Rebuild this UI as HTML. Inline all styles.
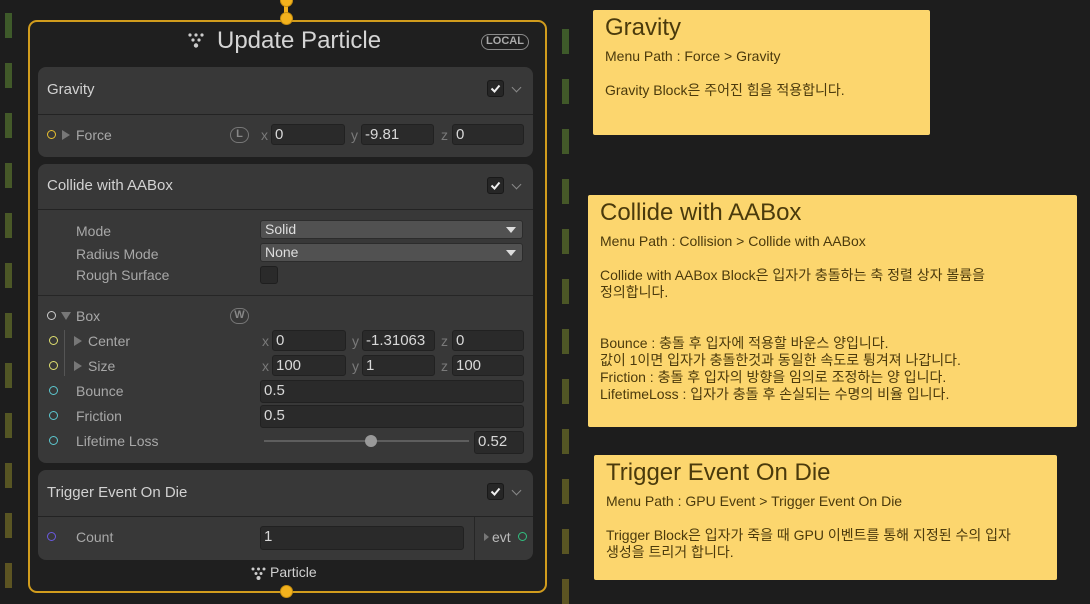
<!DOCTYPE html>
<html><head><meta charset="utf-8"><style>
*{margin:0;padding:0;box-sizing:border-box}
body{width:1090px;height:601px;background:#1d1d1d;position:relative;overflow:hidden;font-family:"Liberation Sans","Noto Sans CJK KR",sans-serif;color:#c4c4c4}
.a{position:absolute}
.dash{position:absolute;width:7px;height:25px}
.node{left:28px;top:20px;width:519px;height:573px;border:2px solid #d19c1d;border-radius:9px;background:#1f1f1f}
.blk{position:absolute;left:38px;width:495px;background:#383838;border-radius:8px}
.hdr{position:absolute;left:0;right:0;top:0;border-bottom:1px solid #232323}
.ht{position:absolute;left:9px;font-size:15px;color:#d2d2d2}
.chk{position:absolute;width:17px;height:17px;background:#262626;border:1px solid #191919;border-radius:3px}
.chev{position:absolute;width:7px;height:7px;border-right:1.5px solid #888;border-bottom:1.5px solid #888;transform:rotate(45deg)}
.lbl{position:absolute;font-size:14px;color:#a8a8a8}
.fld{position:absolute;height:21px;background:#2a2a2a;border:1px solid #212121;border-radius:3px;font-size:15px;color:#d8d8d8;padding-left:3px;line-height:19px}
.ax{position:absolute;font-size:14px;color:#7a7a7a}
.port{position:absolute;width:9px;height:9px;border-radius:50%;border:1.5px solid}
.dd{position:absolute;height:19px;background:#515151;border:1px solid #2c2c2c;border-radius:3px;font-size:14px;color:#dedede;padding-left:4px;line-height:17px}
.dd:after{content:"";position:absolute;right:6px;top:6px;border-left:5px solid transparent;border-right:5px solid transparent;border-top:6px solid #ddd}
.tri{position:absolute;border-top:5px solid transparent;border-bottom:5px solid transparent;border-left:8px solid #777}
.note{position:absolute;background:#fcd66e;border-radius:2px;color:#4b3a0c;font-size:14px;line-height:17px}
.note h1{font-weight:normal;font-size:24px;line-height:28px;color:#4a3a0c}
.pill{position:absolute;border:1.5px solid #8a8a8a;border-radius:9px;font-size:11px;font-weight:bold;color:#aaa;text-align:center}
</style></head><body>

<div id="dl"></div>
<script>
(function(){var h="";for(var i=0;i<12;i++){var y=13+i*50;var t=i/11;var r=Math.round(62+t*30),g=Math.round(90-t*6),b=Math.round(42-t*8);
h+='<div class="dash" style="left:5px;top:'+y+'px;background:rgb('+r+','+g+','+b+')"></div>';
h+='<div class="dash" style="left:562px;top:'+(y+16)+'px;background:rgb('+r+','+g+','+b+')"></div>';}
document.getElementById("dl").outerHTML=h;})();
</script>

<div class="a node"></div>
<div class="a" style="left:284px;top:0;width:4px;height:18px;background:#f3b21d"></div>
<div class="a" style="left:280px;top:-6px;width:13px;height:13px;border-radius:50%;background:#f3b21d;border:1.5px solid #c68e10"></div>
<div class="a" style="left:280px;top:12px;width:13px;height:13px;border-radius:50%;background:#f3b21d;border:1.5px solid #c68e10"></div>
<div class="a" style="left:280px;top:585px;width:13px;height:13px;border-radius:50%;background:#f3b21d;border:1.5px solid #c68e10"></div>

<svg class="a" style="left:188px;top:33px" width="18" height="16"><g fill="#ccc"><circle cx="2" cy="2" r="1.6"/><circle cx="8" cy="2" r="1.6"/><circle cx="14" cy="2" r="1.6"/><circle cx="5" cy="7" r="1.6"/><circle cx="11" cy="7" r="1.6"/><circle cx="8" cy="12.5" r="2.2"/></g></svg>
<div class="a" style="left:217px;top:27px;font-size:24px;color:#d4d4d4">Update Particle</div>
<div class="pill" style="left:481px;top:34px;width:48px;height:16px;line-height:13px">LOCAL</div>

<!-- Gravity -->
<div class="blk" style="top:67px;height:90px">
 <div class="hdr" style="height:48px"><div class="ht" style="top:14px">Gravity</div>
  <div class="chk" style="left:449px;top:13px"><svg width="15" height="15"><path d="M3.5 7.5l3 3 5-6" stroke="#eee" stroke-width="2" fill="none"/></svg></div><div class="chev" style="left:475px;top:17px"></div></div>
</div>
<div class="port" style="left:47px;top:130px;border-color:#e8c030"></div>
<div class="tri" style="left:62px;top:130px"></div>
<div class="lbl" style="left:76px;top:127px">Force</div>
<div class="pill" style="left:230px;top:127px;width:19px;height:16px;line-height:13px;color:#888;border-color:#777">L</div>
<div class="ax" style="left:261px;top:127px">x</div><div class="fld" style="left:271px;top:124px;width:74px">0</div>
<div class="ax" style="left:351px;top:127px">y</div><div class="fld" style="left:361px;top:124px;width:73px">-9.81</div>
<div class="ax" style="left:441px;top:127px">z</div><div class="fld" style="left:452px;top:124px;width:72px">0</div>

<!-- Collide -->
<div class="blk" style="top:164px;height:299px">
 <div class="hdr" style="height:46px"><div class="ht" style="top:13px">Collide with AABox</div>
  <div class="chk" style="left:449px;top:13px"><svg width="15" height="15"><path d="M3.5 7.5l3 3 5-6" stroke="#eee" stroke-width="2" fill="none"/></svg></div><div class="chev" style="left:475px;top:17px"></div></div>
 <div class="a" style="left:0;right:0;top:131px;border-top:1px solid #262626"></div>
</div>
<div class="lbl" style="left:76px;top:223px">Mode</div>
<div class="dd" style="left:260px;top:220px;width:263px">Solid</div>
<div class="lbl" style="left:76px;top:246px">Radius Mode</div>
<div class="dd" style="left:260px;top:243px;width:263px">None</div>
<div class="lbl" style="left:76px;top:267px">Rough Surface</div>
<div class="a" style="left:260px;top:266px;width:18px;height:18px;background:#2a2a2a;border:1px solid #1f1f1f;border-radius:3px"></div>

<div class="port" style="left:47px;top:311px;border-color:#ccc"></div>
<div class="a" style="left:61px;top:312px;border-left:5px solid transparent;border-right:5px solid transparent;border-top:8px solid #777"></div>
<div class="lbl" style="left:76px;top:308px">Box</div>
<div class="pill" style="left:230px;top:308px;width:19px;height:16px;line-height:13px;color:#888;border-color:#777">W</div>

<div class="port" style="left:49px;top:336px;border-color:#e0e070"></div>
<div class="a" style="left:64px;top:330px;width:1px;height:46px;background:#555"></div>
<div class="tri" style="left:74px;top:336px"></div>
<div class="lbl" style="left:88px;top:333px">Center</div>
<div class="ax" style="left:262px;top:333px">x</div><div class="fld" style="left:272px;top:330px;width:74px">0</div>
<div class="ax" style="left:352px;top:333px">y</div><div class="fld" style="left:362px;top:330px;width:73px">-1.31063</div>
<div class="ax" style="left:441px;top:333px">z</div><div class="fld" style="left:452px;top:330px;width:72px">0</div>

<div class="port" style="left:49px;top:361px;border-color:#e0e070"></div>
<div class="tri" style="left:74px;top:361px"></div>
<div class="lbl" style="left:88px;top:358px">Size</div>
<div class="ax" style="left:262px;top:358px">x</div><div class="fld" style="left:272px;top:355px;width:74px">100</div>
<div class="ax" style="left:352px;top:358px">y</div><div class="fld" style="left:362px;top:355px;width:73px">1</div>
<div class="ax" style="left:441px;top:358px">z</div><div class="fld" style="left:452px;top:355px;width:72px">100</div>

<div class="port" style="left:49px;top:386px;border-color:#5cc8d0"></div>
<div class="lbl" style="left:76px;top:383px">Bounce</div>
<div class="fld" style="left:260px;top:380px;width:264px;height:23px">0.5</div>
<div class="port" style="left:49px;top:411px;border-color:#5cc8d0"></div>
<div class="lbl" style="left:76px;top:408px">Friction</div>
<div class="fld" style="left:260px;top:405px;width:264px;height:23px">0.5</div>
<div class="port" style="left:49px;top:436px;border-color:#5cc8d0"></div>
<div class="lbl" style="left:76px;top:433px">Lifetime Loss</div>
<div class="a" style="left:264px;top:440px;width:205px;height:2px;background:#5e5e5e"></div>
<div class="a" style="left:365px;top:435px;width:12px;height:12px;border-radius:50%;background:#999"></div>
<div class="fld" style="left:474px;top:431px;width:50px;height:23px">0.52</div>

<!-- Trigger -->
<div class="blk" style="top:470px;height:90px">
 <div class="hdr" style="height:47px"><div class="ht" style="top:14px">Trigger Event On Die</div>
  <div class="chk" style="left:449px;top:13px"><svg width="15" height="15"><path d="M3.5 7.5l3 3 5-6" stroke="#eee" stroke-width="2" fill="none"/></svg></div><div class="chev" style="left:475px;top:17px"></div></div>
 <div class="a" style="left:436px;top:47px;width:1px;height:43px;background:#262626"></div>
</div>
<div class="port" style="left:47px;top:532px;border-color:#6a5ae0"></div>
<div class="lbl" style="left:76px;top:529px">Count</div>
<div class="fld" style="left:260px;top:526px;width:204px;height:24px">1</div>
<div class="a" style="left:484px;top:533px;border-top:4px solid transparent;border-bottom:4px solid transparent;border-left:5px solid #777"></div>
<div class="lbl" style="left:492px;top:529px;color:#bbb">evt</div>
<div class="port" style="left:518px;top:532px;border-color:#30c080"></div>

<svg class="a" style="left:251px;top:567px" width="16" height="14"><g fill="#ccc"><circle cx="2" cy="2" r="1.5"/><circle cx="7.5" cy="2" r="1.5"/><circle cx="13" cy="2" r="1.5"/><circle cx="5" cy="6.5" r="1.5"/><circle cx="10" cy="6.5" r="1.5"/><circle cx="7.5" cy="11" r="2"/></g></svg>
<div class="a" style="left:270px;top:564px;font-size:14px;color:#d0d0d0">Particle</div>

<!-- notes -->
<div class="note" style="left:593px;top:10px;width:337px;height:125px;padding:4px 12px">
<h1>Gravity</h1><div style="margin-top:6px">Menu Path : Force &gt; Gravity</div><div style="margin-top:17px">Gravity Block은 주어진 힘을 적용합니다.</div></div>
<div class="note" style="left:588px;top:195px;width:489px;height:232px;padding:4px 12px">
<h1>Collide with AABox</h1><div style="margin-top:6px">Menu Path : Collision &gt; Collide with AABox</div>
<div style="margin-top:17px">Collide with AABox Block은 입자가 충돌하는 축 정렬 상자 볼륨을<br>정의합니다.</div>
<div style="margin-top:34px">Bounce : 충돌 후 입자에 적용할 바운스 양입니다.<br>값이 1이면 입자가 충돌한것과 동일한 속도로 튕겨져 나갑니다.<br>Friction : 충돌 후 입자의 방향을 임의로 조정하는 양 입니다.<br>LifetimeLoss : 입자가 충돌 후 손실되는 수명의 비율 입니다.</div></div>
<div class="note" style="left:594px;top:455px;width:463px;height:125px;padding:4px 12px">
<h1>Trigger Event On Die</h1><div style="margin-top:6px">Menu Path : GPU Event &gt; Trigger Event On Die</div>
<div style="margin-top:17px">Trigger Block은 입자가 죽을 때 GPU 이벤트를 통해 지정된 수의 입자<br>생성을 트리거 합니다.</div></div>
</body></html>
